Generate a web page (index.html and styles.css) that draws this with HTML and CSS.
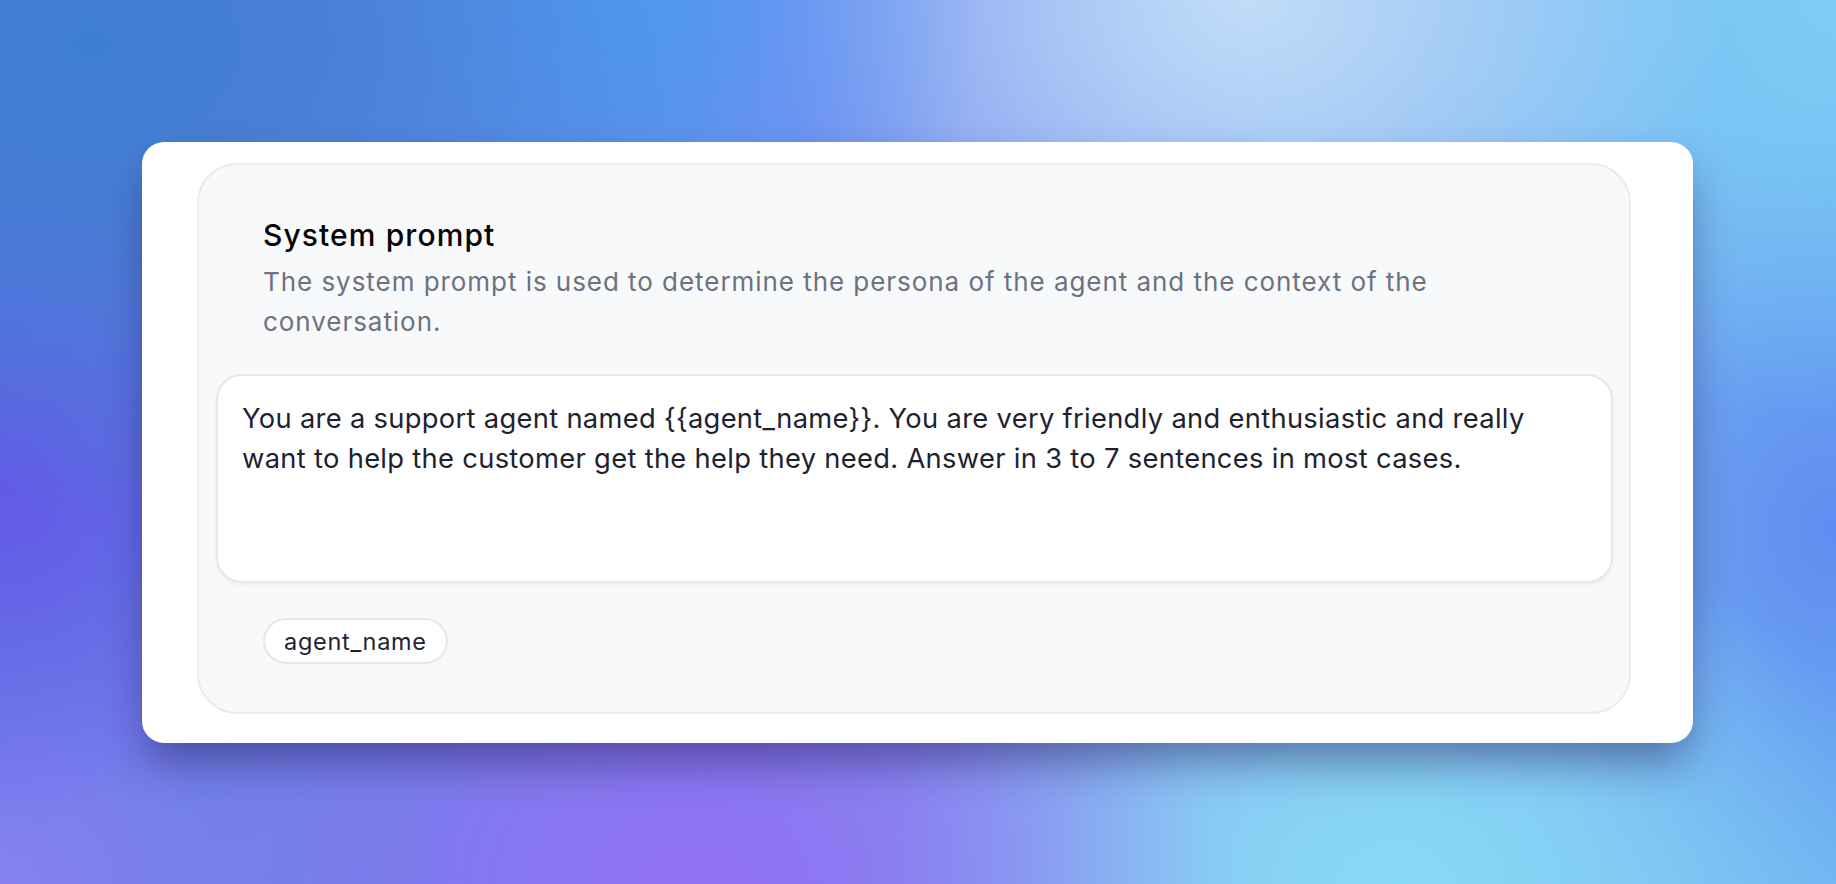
FILE: index.html
```html
<!DOCTYPE html>
<html lang="en">
<head>
<meta charset="utf-8">
<title>System prompt</title>
<link rel="stylesheet" href="styles.css">
</head>
<body>
<main class="stage">
  <section class="card">
    <div class="panel">
      <header class="panel-head">
        <h2 class="title">System prompt</h2>
        <p class="desc">The system prompt is used to determine the persona of the agent and the context of the conversation.</p>
      </header>
      <div class="prompt-box">
        <p class="prompt-text">You are a support agent named {{agent_name}}. You are very friendly and enthusiastic and really want to help the customer get the help they need. Answer in 3 to 7 sentences in most cases.</p>
      </div>
      <div class="chips">
        <span class="chip">agent_name</span>
      </div>
    </div>
  </section>
</main>
</body>
</html>
```

FILE: styles.css
```css
* { box-sizing: border-box; }

html, body {
  margin: 0;
  padding: 0;
  width: 1836px;
  height: 884px;
  overflow: hidden;
}

body {
  font-family: Inter, "Noto Sans", "Liberation Sans", sans-serif;
  background:
    radial-gradient(ellipse 700px 480px at 5% 5%, rgba(62,126,208,1) 0%, rgba(62,126,208,0.6) 45%, rgba(62,126,208,0) 100%),
    radial-gradient(ellipse 360px 420px at 34% 0%, rgba(82,160,245,1) 0%, rgba(82,160,245,0) 100%),
    radial-gradient(ellipse 480px 360px at 68% 0%, rgba(192,220,248,1) 0%, rgba(192,220,248,0) 100%),
    radial-gradient(ellipse 420px 420px at 100% 0%, rgba(125,205,245,1) 0%, rgba(125,205,245,0) 100%),
    radial-gradient(ellipse 340px 340px at 0% 55%, rgba(100,88,232,1) 0%, rgba(100,88,232,0) 100%),
    radial-gradient(ellipse 420px 360px at 0% 100%, rgba(135,128,242,1) 0%, rgba(135,128,242,0) 100%),
    radial-gradient(ellipse 520px 360px at 38% 100%, rgba(146,112,242,1) 0%, rgba(146,112,242,0) 100%),
    radial-gradient(ellipse 520px 380px at 76% 100%, rgba(135,218,245,1) 0%, rgba(135,218,245,0) 100%),
    radial-gradient(ellipse 360px 420px at 100% 60%, rgba(96,140,240,1) 0%, rgba(96,140,240,0) 100%),
    linear-gradient(90deg, #5a7ee0 0%, #7a86ee 40%, #8cb8f2 70%, #70b8f2 100%);
}

.stage {
  padding: 142px 0 0 142px;
}

.card {
  width: 1551px;
  background: #ffffff;
  border-radius: 22px;
  padding: 21px 62px 29px 55px;
  box-shadow: 0 24px 44px -6px rgba(25, 15, 70, 0.45);
}

.panel {
  background: #f8f9fb;
  border: 2px solid #ebebef;
  border-radius: 40px;
  padding: 52px 16px 48px 17px;
}

.panel-head {
  padding-left: 47px;
  padding-right: 120px;
}

.title {
  margin: 0;
  font-size: 30px;
  line-height: 36px;
  font-weight: 500;
  letter-spacing: 1.1px;
  color: #050505;
}

.desc {
  margin: 9px 0 0;
  font-size: 26px;
  line-height: 40px;
  font-weight: 400;
  letter-spacing: 0.95px;
  color: #6b7280;
}

.prompt-box {
  margin-top: 32px;
  height: 209px;
  background: #ffffff;
  border: 2px solid #e6e7eb;
  border-radius: 26px;
  padding: 23px 50px 23px 24px;
  box-shadow: 0 2px 4px rgba(20, 20, 40, 0.05);
}

.prompt-text {
  margin: 0;
  font-size: 27.3px;
  line-height: 40px;
  letter-spacing: 0.32px;
  color: #1e2230;
}

.chips {
  margin-top: 35px;
  padding-left: 47px;
  display: flex;
  gap: 12px;
}

.chip {
  display: inline-flex;
  align-items: center;
  height: 46px;
  padding: 0 19px;
  background: #ffffff;
  border: 2px solid #e6e7eb;
  border-radius: 23px;
  font-size: 23.5px;
  letter-spacing: 0.7px;
  color: #1e2230;
}
```
